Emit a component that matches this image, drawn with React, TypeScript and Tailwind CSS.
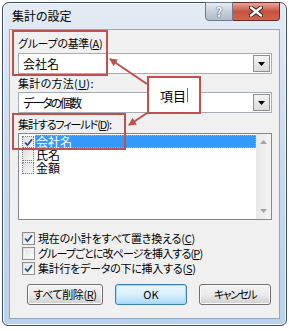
import React from "react";

const Check = ({ color = "#2b4c9b" }: { color?: string }) => (
  <svg width="9" height="9" viewBox="0 0 9 9" className="absolute left-[1px] top-[1px]">
    <path d="M1 4.5 L3.5 7.2 L8 1.2" fill="none" stroke={color} strokeWidth="1.8" />
  </svg>
);

const CheckBox = ({ checked }: { checked?: boolean }) => (
  <div className="relative w-[13px] h-[13px] border border-[#8e8f8f] bg-gradient-to-br from-[#dcdcdc] to-[#fbfbfb] shrink-0">
    <div className="absolute inset-[1px] border border-[#f4f4f4] bg-gradient-to-br from-[#e3e3e3] to-[#fafafa]" />
    {checked && <Check />}
  </div>
);

const ComboBox = ({ value, tracking = "" }: { value: string; tracking?: string }) => (
  <div className="flex items-center h-[21px] w-[254px] border border-[#a5acb5] bg-white pl-[4px] pr-[1px]">
    <span className={`flex-1 text-[12px] leading-none text-black whitespace-nowrap ${tracking}`}>{value}</span>
    <div className="flex items-center justify-center w-[17px] h-[17px] border border-[#8f8f8f] bg-gradient-to-b from-[#f5f5f5] to-[#dcdcdc]">
      <svg width="7" height="4" viewBox="0 0 7 4">
        <path d="M0 0 H7 L3.5 4 Z" fill="#000" />
      </svg>
    </div>
  </div>
);

const Button = ({ children, w, primary, tracking = "" }: { children: React.ReactNode; w: string; primary?: boolean; tracking?: string }) => (
  <div
    className={`${w} h-[21px] rounded-[3px] border flex items-center justify-center text-[11px] leading-none text-black whitespace-nowrap ${tracking} ${
      primary
        ? "border-[#3c7fb1] shadow-[inset_0_0_0_1px_#a7d9f5] bg-gradient-to-b from-[#eaf6fd] via-[#d9f0fc] to-[#a7d9f5]"
        : "border-[#707070] shadow-[inset_0_0_0_1px_#fbfbfb] bg-gradient-to-b from-[#f2f2f2] via-[#ebebeb] to-[#cfcfcf]"
    }`}
  >
    {children}
  </div>
);

const ListItem = ({ label, checked, selected }: { label: string; checked?: boolean; selected?: boolean }) => (
  <div className="flex items-center h-[13px]">
    <div className="relative w-[12px] h-[12px] ml-[3px] border border-dotted border-[#7a7a7a] bg-gradient-to-br from-[#dedede] to-[#f8f8f8] shrink-0">
      {checked && <Check />}
    </div>
    <div
      className={`ml-[1px] h-[13px] pl-[1px] text-[12px] leading-[13px] whitespace-nowrap ${
        selected ? "w-[221px] bg-[#3399ff] text-white outline outline-1 outline-dotted outline-[#e8a24c] -outline-offset-1" : "text-black"
      }`}
    >
      {label}
    </div>
  </div>
);

const Row = ({ children, checked, tracking = "" }: { children: React.ReactNode; checked?: boolean; tracking?: string }) => (
  <div className={`h-[15px] flex items-center gap-[3px] text-[11px] leading-none whitespace-nowrap ${tracking}`}>
    <CheckBox checked={checked} />
    <span>{children}</span>
  </div>
);

export default function App() {
  return (
    <div className="relative w-[289px] h-[331px] bg-white overflow-hidden font-['Noto_Sans_CJK_JP','Noto_Sans',sans-serif] [font-feature-settings:'palt']">
      <div className="absolute left-[2px] top-[2px] w-[285px] h-[324px] rounded-t-[7px] rounded-b-[6px] border border-[#3f4d60] bg-gradient-to-b from-[#e4ebf4] via-[#c9daee] to-[#b9d1ea] flex flex-col shadow-[inset_0_0_0_1px_#f2f7fc]">
        {/* title bar */}
        <div className="relative h-[26px] flex shrink-0">
          <span className="pl-[9px] pt-[5px] text-[12px] leading-[16px] text-black">集計の設定</span>
          <div className="absolute right-[6px] -top-[1px] flex h-[19px]">
            <div className="w-[28px] h-[19px] rounded-bl-[4px] border border-[#6d7b8d] bg-gradient-to-b from-[#e8edf3] via-[#c5d0dc] to-[#aebccc] flex items-center justify-center text-[13px] font-bold text-white [text-shadow:0_0_1px_#2e3b4c,0_0_1px_#2e3b4c]">
              ?
            </div>
            <div className="w-[47px] h-[19px] rounded-br-[4px] border border-l-0 border-[#6b2a25] bg-gradient-to-b from-[#e7a599] via-[#c8523f] to-[#d0654d] flex items-center justify-center">
              <svg width="14" height="11" viewBox="0 0 14 11">
                <path d="M2 1.5 L12 9.5 M12 1.5 L2 9.5" stroke="#3b1a16" strokeWidth="4.2" strokeLinecap="round" />
                <path d="M2 1.5 L12 9.5 M12 1.5 L2 9.5" stroke="#fff" strokeWidth="2.4" strokeLinecap="round" />
              </svg>
            </div>
          </div>
        </div>

        {/* client area */}
        <div className="ml-[6px] mr-[6px] w-[271px] h-[290px] border border-[#94a6bc] bg-[#f0f0f0] flex flex-col pl-[8px] text-black">
          <div className="mt-[6px] h-[14px] text-[11px] leading-[14px] whitespace-nowrap tracking-[-0.3px]">
            グループの基準(<u>A</u>)
          </div>
          <div className="mt-[3px]">
            <ComboBox value="会社名" />
          </div>
          <div className="mt-[2px] h-[14px] text-[11px] leading-[14px] whitespace-nowrap tracking-[0.3px]">
            集計の方法(<u>U</u>):
          </div>
          <div className="mt-[2px]">
            <ComboBox value="データの個数" tracking="tracking-[-2px]" />
          </div>
          <div className="mt-[4px] h-[14px] text-[11px] leading-[14px] whitespace-nowrap tracking-[-1.1px]">
            集計するフィールド(<u>D</u>):
          </div>
          <div className="mt-[2px] flex w-[254px] h-[87px] border border-[#828790] bg-white">
            <div className="flex-1 flex flex-col pt-[1px]">
              <ListItem label="会社名" checked selected />
              <ListItem label="氏名" />
              <ListItem label="金額" />
            </div>
            <div className="w-[17px] bg-gradient-to-r from-[#e8e8e8] to-[#f4f4f4] flex flex-col justify-between items-center py-[6px]">
              <svg width="7" height="4" viewBox="0 0 7 4">
                <path d="M0 4 H7 L3.5 0 Z" fill="#a3a3a3" />
              </svg>
              <svg width="7" height="4" viewBox="0 0 7 4">
                <path d="M0 0 H7 L3.5 4 Z" fill="#a3a3a3" />
              </svg>
            </div>
          </div>

          <div className="mt-[11px] flex flex-col pl-[4px]">
            <Row checked tracking="tracking-[-0.2px]">
              現在の小計をすべて置き換える(<u>C</u>)
            </Row>
            <Row tracking="tracking-[-0.85px]">
              グループごとに改ページを挿入する(<u>P</u>)
            </Row>
            <Row checked tracking="tracking-[-0.25px]">
              集計行をデータの下に挿入する(<u>S</u>)
            </Row>
          </div>

          <div className="mt-[8px] ml-[9px] flex gap-[12px]">
            <Button w="w-[76px]" tracking="tracking-[-0.4px]">
              すべて削除(<u>R</u>)
            </Button>
            <Button w="w-[72px]" primary>
              OK
            </Button>
            <Button w="w-[72px]" tracking="tracking-[-1.5px]">
              キャンセル
            </Button>
          </div>
        </div>
      </div>

      {/* annotations */}
      <div className="absolute left-[12px] top-[30px] w-[96px] h-[46px] border-2 border-[#c0504d]" />
      <div className="absolute left-[12px] top-[113px] w-[114px] h-[37px] border-2 border-[#c0504d]" />
      <div className="absolute left-[147px] top-[76px] w-[54px] h-[38px] border-2 border-[#c0504d] bg-white flex items-center justify-center text-[13px] leading-none text-black">
        項目<span className="ml-[1px] w-[1px] h-[14px] bg-[#3a6fd8]" />
      </div>
      <svg className="absolute left-0 top-0 pointer-events-none" width="289" height="331" viewBox="0 0 289 331">
        <defs>
          <marker id="ah" markerWidth="8" markerHeight="8" refX="7" refY="4" orient="auto" markerUnits="userSpaceOnUse">
            <path d="M0 0 L8 4 L0 8 Z" fill="#c0504d" />
          </marker>
        </defs>
        <line x1="147" y1="84" x2="110" y2="59" stroke="#c0504d" strokeWidth="2" markerEnd="url(#ah)" />
        <line x1="147" y1="113" x2="129" y2="125" stroke="#c0504d" strokeWidth="2" markerEnd="url(#ah)" />
      </svg>
    </div>
  );
}
